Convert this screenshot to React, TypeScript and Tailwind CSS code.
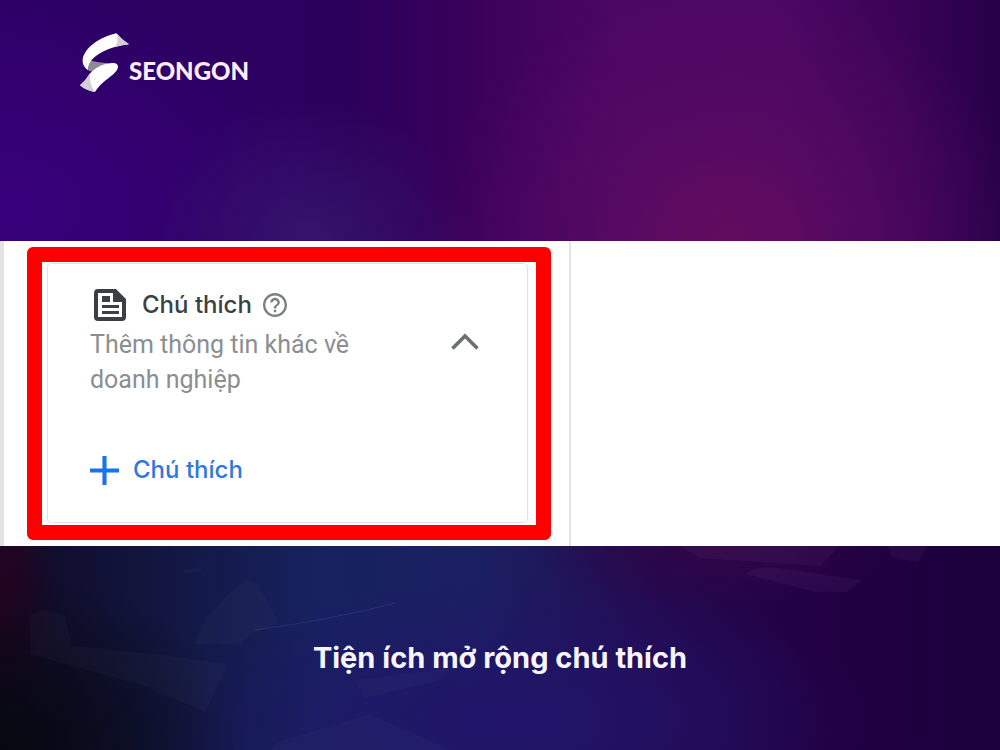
function Logo() {
  return (
    <a href="#" aria-label="SEONGON" className="flex items-start">
      <svg viewBox="12 14 148 178" className="h-[59px] w-[49px]" aria-hidden="true">
        <path fill="#8f8b96" d="M42 97Q66 104 98 105L52 132Q40 130 30 122Z" />
        <path fill="#ffffff" d="M122 15C72 26 26 58 20 94Q18 114 36 126C34 90 88 56 160 48Q138 35 122 15Z" />
        <path fill="#d3cfdb" d="M122 15Q138 35 160 48Q140 50 117 57Q131 38 122 15Z" />
        <path fill="#ffffff" d="M42 136C66 112 94 102 118 105Q129 108 126 121C116 144 84 152 57 192Q30 188 12 172Q30 156 42 136Z" />
        <path fill="#d3cfdb" d="M42 136Q30 156 12 172Q30 188 57 192Q40 168 42 136Z" />
      </svg>
      <span className="pt-[22px] font-['Lato',sans-serif] text-2xl font-black text-[#fdeeff]">SEONGON</span>
    </a>
  )
}

function NoteIcon() {
  return (
    <svg viewBox="0 0 32 32" className="h-8 w-8 shrink-0" aria-hidden="true">
      <path fill="#3c4043" fillRule="evenodd" d="M4 0H22L32 10V28Q32 32 28 32H4Q0 32 0 28V4Q0 0 4 0ZM4 4V28H28V13H19V4Z" />
      <path fill="#3c4043" d="M8 7H16V13H8ZM8 16H25V19H8ZM8 22H25V25H8Z" />
    </svg>
  )
}

function HelpIcon() {
  return (
    <svg viewBox="2 2 20 20" className="h-6 w-6" aria-hidden="true">
      <path fill="#7d8083" d="M11 18h2v-2h-2v2zm1-16C6.48 2 2 6.48 2 12s4.48 10 10 10 10-4.48 10-10S17.52 2 12 2zm0 18c-4.41 0-8-3.59-8-8s3.59-8 8-8 8 3.59 8 8-3.59 8-8 8zm0-14c-2.21 0-4 1.79-4 4h2c0-1.1.9-2 2-2s2 .9 2 2c0 2-3 1.75-3 5h2c0-2.25 3-2.5 3-5 0-2.21-1.79-4-4-4z" />
    </svg>
  )
}

// faint shapes of the people and desks behind the caption
function Backdrop() {
  return (
    <svg viewBox="0 0 1000 204" preserveAspectRatio="none" className="absolute inset-0 h-full w-full" aria-hidden="true">
      <g fill="#8fa0b8" fillOpacity="0.04">
        <path d="M247 34L258 38L279 78L254 86L240 98H195Q205 62 247 34Z" />
        <path d="M30 70Q45 58 65 70L72 100L155 108L228 118L205 166L145 140L30 108Z" />
        <path d="M355 134L450 122L435 136L365 152Z" />
        <path d="M182 24L203 20L200 26L185 28Z" />
        <path d="M278 196L370 168L450 204H270Z" />
      </g>
      <path d="M255 84Q330 74 395 57" fill="none" stroke="#8fa0b8" strokeOpacity="0.14" />
      <g fill="#b88fd0" fillOpacity="0.06">
        <path d="M745 28Q760 18 785 23L862 34L848 46H815Z" />
        <path d="M888 0H928L918 16L892 12Z" />
        <path d="M680 0H840L820 20L700 12Z" />
      </g>
    </svg>
  )
}

function AssetCard() {
  return (
    <div className="rounded-[4px] border border-[#dfe1e3] bg-white pt-[25px] pr-12 pb-[34px] pl-[42px]">
      <div className="flex items-start justify-between">
        <div>
          <div className="flex items-center gap-4 pl-1">
            <NoteIcon />
            <div className="flex items-center gap-[11px]">
              <h2 className="font-['Inter',sans-serif] text-2xl leading-8 font-medium text-[#3c4043]">Chú thích</h2>
              <button type="button" aria-label="Trợ giúp">
                <HelpIcon />
              </button>
            </div>
          </div>
          <p className="mt-[6px] max-w-[280px] font-['Roboto',sans-serif] text-[25px] leading-[35px] text-[#8b8e91]">
            Thêm thông tin khác về doanh nghiệp
          </p>
        </div>
        <button type="button" aria-label="Thu gọn" className="mt-11">
          <svg viewBox="0 0 28 17" className="h-[17px] w-7" aria-hidden="true">
            <path fill="none" stroke="#6b6f73" strokeWidth="3.6" d="M1.5 15.5L14 3L26.5 15.5" />
          </svg>
        </button>
      </div>
      <button type="button" className="mt-[55px] flex items-center gap-[14px] font-['Inter',sans-serif] text-2xl leading-9 font-medium text-[#2f78dc]">
        <svg viewBox="5 5 14 14" className="h-[29px] w-[29px]" aria-hidden="true">
          <path fill="#1a73e8" d="M19 13h-6v6h-2v-6H5v-2h6V5h2v6h6v2z" />
        </svg>
        Chú thích
      </button>
    </div>
  )
}

export default function App() {
  return (
    <div className="flex min-h-screen flex-col bg-[#1d0048]">
      <header className="h-[241px] bg-[radial-gradient(ellipse_30%_110%_at_73%_100%,#630c5e_0%,#5a0b6399_45%,#4a076500_100%),radial-gradient(ellipse_16%_60%_at_31%_100%,#36146c_0%,#36146c00_100%),radial-gradient(ellipse_35%_90%_at_0%_85%,#38007c_0%,#38007c00_100%),linear-gradient(90deg,#2d0066_0%,#2b005c_35%,#38005a_46%,#4b0764_62%,#4b0763_78%,#3a0357_90%,#260048_100%)] px-20 pt-[33px]">
        <Logo />
      </header>

      <main className="flex bg-white">
        <section className="w-[57.1%] border-r-2 border-l-4 border-[#e2e3e5] py-[6px] pr-[18px] pl-[23px]">
          <div className="rounded-md border-[15px] border-[#ff0000] bg-white pt-px pr-2 pb-[2px] pl-[5px]">
            <AssetCard />
          </div>
        </section>
      </main>

      <footer className="relative flex min-h-[204px] flex-1 items-center justify-center bg-[radial-gradient(ellipse_24%_90%_at_0%_100%,#06080f_0%,#080b1900_100%),radial-gradient(ellipse_6%_70%_at_0%_20%,#270322_0%,#27032200_100%),radial-gradient(ellipse_18%_30%_at_72%_0%,#300548_0%,#30054800_100%),radial-gradient(ellipse_35%_70%_at_52%_85%,#211369_0%,#21136900_100%),linear-gradient(90deg,#100a26_0%,#121640_16%,#172260_32%,#1b2062_48%,#240a50_65%,#220043_82%,#1b003d_100%)] pt-5">
        <Backdrop />
        <h1 className="relative font-['Inter',sans-serif] text-[29px] leading-9 font-bold text-[#f7f5ff]">Tiện ích mở rộng chú thích</h1>
      </footer>
    </div>
  )
}
